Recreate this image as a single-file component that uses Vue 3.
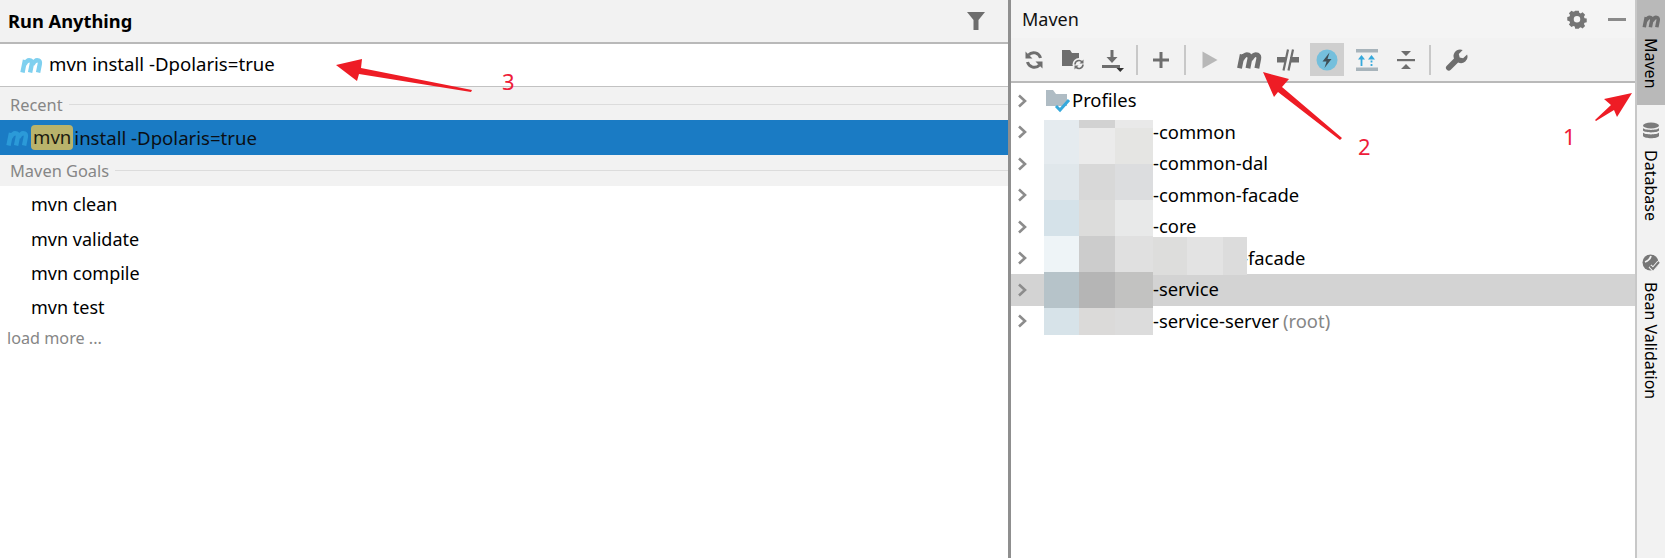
<script setup>
const goals = ['mvn clean', 'mvn validate', 'mvn compile', 'mvn test']
const modules = [
  { name: '-common' },
  { name: '-common-dal' },
  { name: '-common-facade' },
  { name: '-core' },
  { name: '-facade', wide: true },
  { name: '-service', selected: true },
  { name: '-service-server', note: '(root)' },
]
const mosaic = [
  ['#e5ebef', '#d2d2d2', '#e9e9e9', 8],
  ['#e5ebef', '#ebebeb', '#e5e5e3', 36],
  ['#e0e7eb', '#d8d8d8', '#dcdddf', 36],
  ['#d5e2e9', '#dcdcdb', '#e8e9e9', 36],
  ['#eef4f7', '#cccccc', '#e0e0e0', 36],
  ['#b6c3c9', '#b5b5b5', '#c2c2c1', 36],
  ['#d7e3e9', '#dbdad9', '#dcdcdc', 27],
]
const mPath = 'M3 16.500L5.500 4M5 8.500Q8 3 11 4.500Q12.800 5.500 12.300 8L10.600 16.500M13 8.500Q16 3 19 4.500Q20.800 5.500 20.300 8L18.600 16.500'
</script>

<template>
  <div class="screen">
    <section class="run">
      <header class="run-head">
        <span class="run-title">Run Anything</span>
        <svg class="filter" width="18" height="18" viewBox="0 0 18 18"><path d="M0 0h18l-6.500 8v10h-5V8z" fill="#6e6e6e" /></svg>
      </header>
      <div class="run-input">
        <svg width="25" height="18" viewBox="0 0 24 18"><path :d="mPath" fill="none" stroke="#7fd0ef" stroke-width="4.400" /></svg>
        <span class="input-text">mvn install -Dpolaris=true</span>
      </div>
      <div class="group first"><span>Recent</span><i></i></div>
      <div class="selected-row">
        <svg width="25" height="18" viewBox="0 0 24 18"><path :d="mPath" fill="none" stroke="#2b9ad8" stroke-width="4.400" /></svg>
        <mark>mvn</mark>
        <span>install -Dpolaris=true</span>
      </div>
      <div class="group"><span>Maven Goals</span><i></i></div>
      <ul class="goals">
        <li v-for="g in goals" :key="g">{{ g }}</li>
      </ul>
      <div class="load-more">load more ...</div>
    </section>

    <section class="maven">
      <header class="maven-head">
        <span>Maven</span>
        <div class="head-actions">
          <svg width="20" height="20" viewBox="0 0 20 20"><path fill="#757575" fill-rule="evenodd" d="M8 1h4l.5 2.400 1.600.7 2.100-1.300 2.800 2.800-1.300 2.100.7 1.600 2.400.5v4l-2.400.5-.7 1.600 1.300 2.100-2.800 2.800-2.100-1.300-1.600.7L12 21H8l-.5-2.400-1.600-.7-2.100 1.300L1 16.400l1.300-2.100-.7-1.600L-.8 12V8l2.400-.5.7-1.600L1 3.800 3.800 1l2.100 1.300 1.600-.7zM10 7a3.600 3.600 0 1 0 0 7.200a3.600 3.600 0 0 0 0-7.200z" transform="translate(1 .8) scale(.9)" /></svg>
          <i class="minimize"></i>
        </div>
      </header>
      <div class="toolbar">
        <span class="tool">
          <svg width="20" height="20" viewBox="0 0 20 20" fill="none" stroke="#6e6e6e" stroke-width="3"><path d="M16.500 8A7 7 0 0 0 4.500 5" /><path d="M3.500 12A7 7 0 0 0 15.500 15" /><path d="M1.500 1.500v7h7zM18.500 18.500v-7h-7z" fill="#6e6e6e" stroke="none" /></svg>
        </span>
        <span class="tool">
          <svg width="25" height="22" viewBox="0 0 25 22"><path d="M1 1h8l2 3h7v13H1z" fill="#6e6e6e" /><circle cx="18" cy="15.500" r="6.500" fill="#f2f2f2" /><path d="M14 15.500a4 4 0 0 1 7-2.600M22 15.500a4 4 0 0 1-7 2.600" fill="none" stroke="#6e6e6e" stroke-width="1.600" /><path d="M22.500 10.500v4h-4zM13.500 20.500v-4h4z" fill="#6e6e6e" /></svg>
        </span>
        <span class="tool">
          <svg width="24" height="24" viewBox="0 0 24 24"><path d="M10.500 2h3v7h4l-5.500 6-5.500-6h4z" fill="#6e6e6e" /><rect x="2" y="17" width="18" height="3" fill="#6e6e6e" /><path d="M16.500 20h7.500l-3.750 4z" fill="#333" /></svg>
        </span>
        <i class="tool-sep"></i>
        <span class="tool">
          <svg width="18" height="18" viewBox="0 0 18 18"><path d="M7.500 1h3v6.500H17v3h-6.500V17h-3v-6.500H1v-3h6.500z" fill="#6e6e6e" /></svg>
        </span>
        <i class="tool-sep"></i>
        <span class="tool">
          <svg width="16" height="18" viewBox="0 0 16 18"><path d="M0.500 0.500l15 8.500-15 8.500z" fill="#b8b8b8" /></svg>
        </span>
        <span class="tool">
          <svg width="27" height="20" viewBox="0 0 24 18"><path :d="mPath" fill="none" stroke="#6e6e6e" stroke-width="4.400" /></svg>
        </span>
        <span class="tool">
          <svg width="24" height="24" viewBox="0 0 24 24"><rect x="1" y="9" width="9" height="5.500" fill="#6e6e6e" /><rect x="14" y="9" width="9" height="5.500" fill="#6e6e6e" /><path d="M7.500 22.500l4.500-21M12.500 22.500l4.500-21" stroke="#6e6e6e" stroke-width="2.200" /></svg>
        </span>
        <span class="tool active">
          <svg width="22" height="22" viewBox="0 0 22 22"><circle cx="11" cy="11" r="10.500" fill="#75bfdc" /><path d="M13.500 3.500L6.500 12.500h4l-2 6.500 7-9h-4z" fill="#3f4f57" /></svg>
        </span>
        <span class="tool">
          <svg width="24" height="24" viewBox="0 0 24 24"><rect x="1" y="1" width="22" height="3.500" fill="#a8b4bb" /><rect x="1" y="19.500" width="22" height="3.500" fill="#a8b4bb" /><path d="M6.500 18v-7" stroke="#35a9dc" stroke-width="1.800" /><path d="M16.500 18v-7" stroke="#35a9dc" stroke-width="1.800" stroke-dasharray="2 1.500" /><path d="M6.500 7l3.500 4.500H3zM16.500 7l3.500 4.500h-7z" fill="#35a9dc" /></svg>
        </span>
        <span class="tool">
          <svg width="20" height="20" viewBox="0 0 20 20"><path d="M5 1h10l-5 5zM5 19h10l-5-5z" fill="#6e6e6e" /><rect x="1" y="9" width="18" height="2.200" fill="#6e6e6e" /></svg>
        </span>
        <i class="tool-sep"></i>
        <span class="tool last">
          <svg width="24" height="24" viewBox="0 0 24 24"><path d="M15 1.500a6.500 6.500 0 0 0-6 9L1.800 17.700a2.800 2.800 0 0 0 4 4l7.300-7.200a6.500 6.500 0 0 0 9-8l-4 3.800-3.400-.9-.9-3.300 3.900-4A6.500 6.500 0 0 0 15 1.500z" fill="#6e6e6e" /></svg>
        </span>
      </div>
      <div class="tree">
        <div class="tree-row">
          <svg class="chev" width="10" height="14" viewBox="0 0 10 14"><path d="M2 1.500L8 7l-6 5.500" fill="none" stroke="#8c8c8c" stroke-width="2.600" /></svg>
          <svg class="profile-icon" width="26" height="24" viewBox="0 0 26 24"><path d="M1 1h7l3 4h11v12H1z" fill="#afbcc4" /><path d="M11 17l4 4 9-10" fill="none" stroke="#35a9dc" stroke-width="3" /></svg>
          <span class="profiles">Profiles</span>
        </div>
        <div v-for="m in modules" :key="m.name" class="tree-row" :class="{ selected: m.selected }">
          <svg class="chev" width="10" height="14" viewBox="0 0 10 14"><path d="M2 1.500L8 7l-6 5.500" fill="none" stroke="#8c8c8c" stroke-width="2.600" /></svg>
          <span class="mod-name" :class="{ wide: m.wide }">{{ m.name }}</span>
          <span v-if="m.note" class="note">{{ m.note }}</span>
        </div>
        <div class="mosaic">
          <div v-for="(r, i) in mosaic" :key="i" class="mosaic-row" :style="{ height: r[3] + 'px' }">
            <i :style="{ background: r[0] }"></i>
            <i :style="{ background: r[1] }"></i>
            <i :style="{ background: r[2] }"></i>
          </div>
        </div>
        <div class="mosaic-ext"><i></i><i></i><i></i></div>
      </div>
    </section>

    <aside class="rail">
      <div class="rail-tab current">
        <svg width="21" height="15" viewBox="0 0 24 18"><path :d="mPath" fill="none" stroke="#6e6e6e" stroke-width="4.400" /></svg>
        <span class="rail-text">Maven</span>
      </div>
      <div class="rail-tab">
        <svg width="18" height="18" viewBox="0 0 18 18" fill="#7c7c7c"><ellipse cx="9" cy="3.500" rx="8" ry="3" /><path d="M1 6c1.500 2.500 14.500 2.500 16 0v2.500c-1.500 2.500-14.500 2.500-16 0zM1 10.500c1.500 2.500 14.500 2.500 16 0V14c-1.500 3-14.500 3-16 0z" /></svg>
        <span class="rail-text">Database</span>
      </div>
      <div class="rail-tab">
        <svg width="18" height="18" viewBox="0 0 18 18"><circle cx="8.500" cy="8.500" r="8" fill="#777" /><path d="M3 8c3-1 5-3 6-6" stroke="#f2f2f2" stroke-width="1.800" fill="none" /><path d="M8 12l3 3 6-7" stroke="#f2f2f2" stroke-width="4" fill="none" /><path d="M8 12l3 3 6-7" stroke="#777" stroke-width="2" fill="none" /></svg>
        <span class="rail-text">Bean Validation</span>
      </div>
    </aside>

    <svg class="notes" width="1665" height="558" viewBox="0 0 1665 558">
      <path d="M336 65L362 59 361 68 472 90 471 92 359 74 357 81z" fill="#ee1c25" />
      <path d="M1263 72L1289 79 1282 87 1342 138 1340 140 1278 92 1274 97z" fill="#ee1c25" />
      <path d="M1632 93L1604 99 1611 105 1595 120 1596 121 1614 110 1617 117z" fill="#ee1c25" />
      <text x="1563" y="145">1</text>
      <text x="1358" y="155">2</text>
      <text x="502" y="90">3</text>
    </svg>
  </div>
</template>

<style>
html, body { margin: 0; background: #fff; }
</style>

<style scoped>
.screen {
  position: relative;
  display: flex;
  width: 1665px;
  height: 558px;
  overflow: hidden;
  background: #fff;
  color: #000;
  font-family: "Noto Sans", "Open Sans", sans-serif;
  font-size: 18px;
}
.run {
  display: flex;
  flex-direction: column;
  width: 1008px;
  flex: none;
  border-right: 3px solid #8f8f8f;
}
.run-head {
  display: flex;
  align-items: center;
  justify-content: space-between;
  height: 42px;
  padding: 0 23px 0 8px;
  background: #f2f2f2;
  border-bottom: 2px solid #b9b9b9;
}
.run-title { font-weight: 700; font-size: 18.300px; margin-top: -2px; }
.run-input {
  display: flex;
  align-items: center;
  gap: 5px;
  height: 42px;
  padding-left: 19px;
  border-bottom: 1px solid #c2c2c2;
  font-size: 18.600px;
}
.input-text { margin-top: -3px; }
.group {
  display: flex;
  align-items: center;
  gap: 6px;
  height: 31px;
  padding-left: 10px;
  background: #f2f2f2;
  color: #868686;
  font-size: 16.400px;
}
.group.first { height: 33px; padding-top: 2px; box-sizing: border-box; }
.group i { flex: 1; height: 1px; background: #dcdcdc; }
.selected-row {
  display: flex;
  align-items: center;
  height: 35px;
  padding-left: 5px;
  background: #1a7bc4;
  font-size: 18.600px;
  color: #0a0f14;
}
.selected-row mark {
  margin: 0 1px 0 1px;
  padding: 0 2px;
  height: 25px;
  line-height: 24px;
  background: #b9b36b;
  border-radius: 4px;
  color: #1c1c10;
}
.goals { margin: 0; padding: 1px 0 0; list-style: none; }
.goals li {
  display: flex;
  align-items: center;
  height: 34.400px;
  padding-left: 31px;
  font-size: 18px;
}
.load-more {
  padding-left: 7px;
  color: #868686;
  font-size: 16.200px;
  line-height: 27px;
}
.maven { display: flex; flex-direction: column; flex: 1; min-width: 0; }
.maven-head {
  display: flex;
  align-items: center;
  justify-content: space-between;
  height: 38px;
  padding: 0 9px 0 11px;
  background: #f4f4f4;
  font-size: 18px;
  color: #111;
}
.head-actions { display: flex; align-items: center; gap: 21px; }
.minimize { display: block; width: 18px; height: 3px; background: #8a8a8a; }
.toolbar {
  display: flex;
  align-items: center;
  height: 43px;
  padding-left: 3.500px;
  background: #f2f2f2;
  border-bottom: 2px solid #b9b9b9;
}
.tool {
  display: flex;
  align-items: center;
  justify-content: center;
  width: 34px;
  height: 33px;
  margin: 0 2.600px;
  flex: none;
}
.tool.active { background: #cfcfcf; }
.tool.last { margin-left: 5px; }
.tool-sep {
  display: block;
  width: 2px;
  height: 30px;
  margin: 0 4px 0 3.500px;
  background: #c8c8c8;
  flex: none;
}
.tree { position: relative; flex: 1; padding-top: 2px; }
.tree-row {
  display: flex;
  align-items: center;
  height: 31.500px;
  padding-left: 6px;
  font-size: 18.400px;
  white-space: nowrap;
}
.tree-row.selected { background: #d3d3d3; }
.profile-icon { margin-left: 18px; }
.mod-name { margin-left: 126px; margin-top: -2px; }
.mod-name.wide { margin-left: 215px; }
.note { margin-left: 4px; margin-top: -2px; color: #868686; }
.profiles { margin-top: -2px; margin-left: 1px; }
.mosaic { position: absolute; left: 33px; top: 37px; width: 109px; }
.mosaic-row { display: grid; grid-template-columns: 35px 36px 38px; }
.mosaic-row i { display: block; }
.mosaic-ext {
  position: absolute;
  left: 142px;
  top: 154px;
  display: grid;
  grid-template-columns: 34px 36px 24px;
  height: 38px;
}
.mosaic-ext i { display: block; background: #dddddc; }
.mosaic-ext i:nth-child(2) { background: #e3e3e3; }
.mosaic-ext i:nth-child(3) { background: #dcdcdc; }
.rail {
  flex: none;
  width: 30px;
  background: #f2f2f2;
  border-left: 2px solid #c8c8c8;
  box-sizing: border-box;
}
.rail-tab {
  display: flex;
  flex-direction: column;
  align-items: center;
  gap: 10px;
  padding: 17px 0 16px;
}
.rail-tab.current { height: 105px; box-sizing: border-box; padding-top: 14px; background: #b9b9b9; }
.rail-text { writing-mode: vertical-rl; font-size: 16px; line-height: 20px; white-space: nowrap; }
.notes { position: absolute; left: 0; top: 0; pointer-events: none; }
.notes text { fill: #ee1c3a; font-family: "Noto Sans", sans-serif; font-size: 22px; }
</style>
